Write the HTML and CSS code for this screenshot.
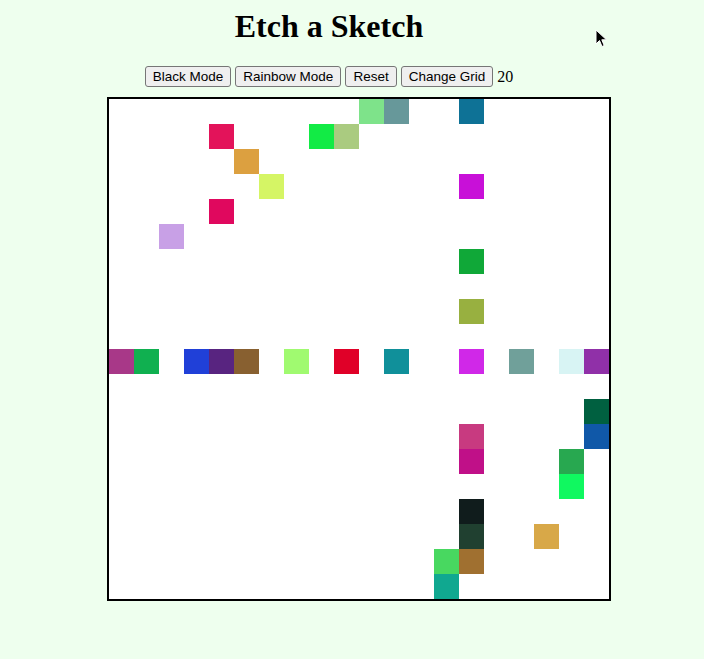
FILE: index.html
```html
<!DOCTYPE html>
<html>
<head>
<meta charset="utf-8">
<title>Etch a Sketch</title>
<link rel="stylesheet" href="styles.css">
</head>
<body>
<div class="top">
  <h1 class="title">Etch a Sketch</h1>
  <div class="controls">
    <button class="btn">Black Mode</button>
    <button class="btn">Rainbow Mode</button>
    <button class="btn">Reset</button>
    <button class="btn">Change Grid</button>
    <span class="size">20</span>
  </div>
</div>
<div class="board" id="board"></div>
<svg class="cursor" width="14" height="20" viewBox="0 0 14 20">
  <path d="M1 1 L1 15 L4.5 11.5 L7 17.5 L9.2 16.5 L6.8 10.8 L11.5 10.8 Z" fill="#000" stroke="#fff" stroke-width="1"/>
</svg>
<script src="app.js"></script>
</body>
</html>
```
FILE: styles.css
```css
html, body {
  margin: 0;
  padding: 0;
}
body {
  background: #eeffee;
  font-family: "Liberation Serif", "Times New Roman", serif;
  position: relative;
  min-height: 659px;
}
.top {
  width: 658px;
  text-align: center;
  padding-top: 8px;
}
.title {
  margin: 0 0 21px 0;
  font-size: 32px;
  font-weight: bold;
  line-height: 37px;
}
.controls {
  height: 21px;
  line-height: 21px;
  font-size: 16px;
}
.btn {
  font-family: "Liberation Sans", Arial, sans-serif;
  font-size: 13.5px;
  height: 21px;
  padding: 1px 7px;
  margin: 0;
  vertical-align: top;
  background: #efefef;
  border: 1px solid #767676;
  border-radius: 3px;
  color: #000;
}
.size {
  font-family: "Liberation Serif", "Times New Roman", serif;
  font-size: 16px;
  vertical-align: top;
}
.board {
  margin: 10px 0 0 107px;
  width: 500px;
  height: 500px;
  border: 2px solid #000;
  background: #ffffff;
  display: grid;
  grid-template-columns: repeat(20, 25px);
  grid-template-rows: repeat(20, 25px);
}
.cell {
  width: 25px;
  height: 25px;
}
.cursor {
  position: absolute;
  left: 595px;
  top: 29px;
}
```
FILE: app.js
```js
var painted = {
  "0,10": "#7ee38a", "0,11": "#67989a", "0,14": "#0e7296",
  "1,4": "#e3135a", "1,8": "#12eb45", "1,9": "#aacb80",
  "2,5": "#dca040",
  "3,6": "#d5f565", "3,14": "#c810d8",
  "4,4": "#e0085e",
  "5,2": "#c8a0e6",
  "6,14": "#10a838",
  "8,14": "#98b040",
  "10,0": "#a83888", "10,1": "#10b050", "10,3": "#2040d8", "10,4": "#582480",
  "10,5": "#886030", "10,7": "#a0fa70", "10,9": "#e00028", "10,11": "#10909a",
  "10,14": "#d028e8", "10,16": "#70a09a", "10,18": "#d8f4f4", "10,19": "#9030a8",
  "12,19": "#006040",
  "13,14": "#c83a80", "13,19": "#1058a8",
  "14,14": "#c01088", "14,18": "#28a850",
  "15,18": "#10f860",
  "16,14": "#101c1c",
  "17,14": "#204030", "17,17": "#d8a848",
  "18,13": "#48d860", "18,14": "#a07030",
  "19,13": "#10a890"
};
var board = document.getElementById("board");
for (var r = 0; r < 20; r++) {
  for (var c = 0; c < 20; c++) {
    var d = document.createElement("div");
    d.className = "cell";
    var col = painted[r + "," + c];
    if (col) d.style.background = col;
    board.appendChild(d);
  }
}
```
